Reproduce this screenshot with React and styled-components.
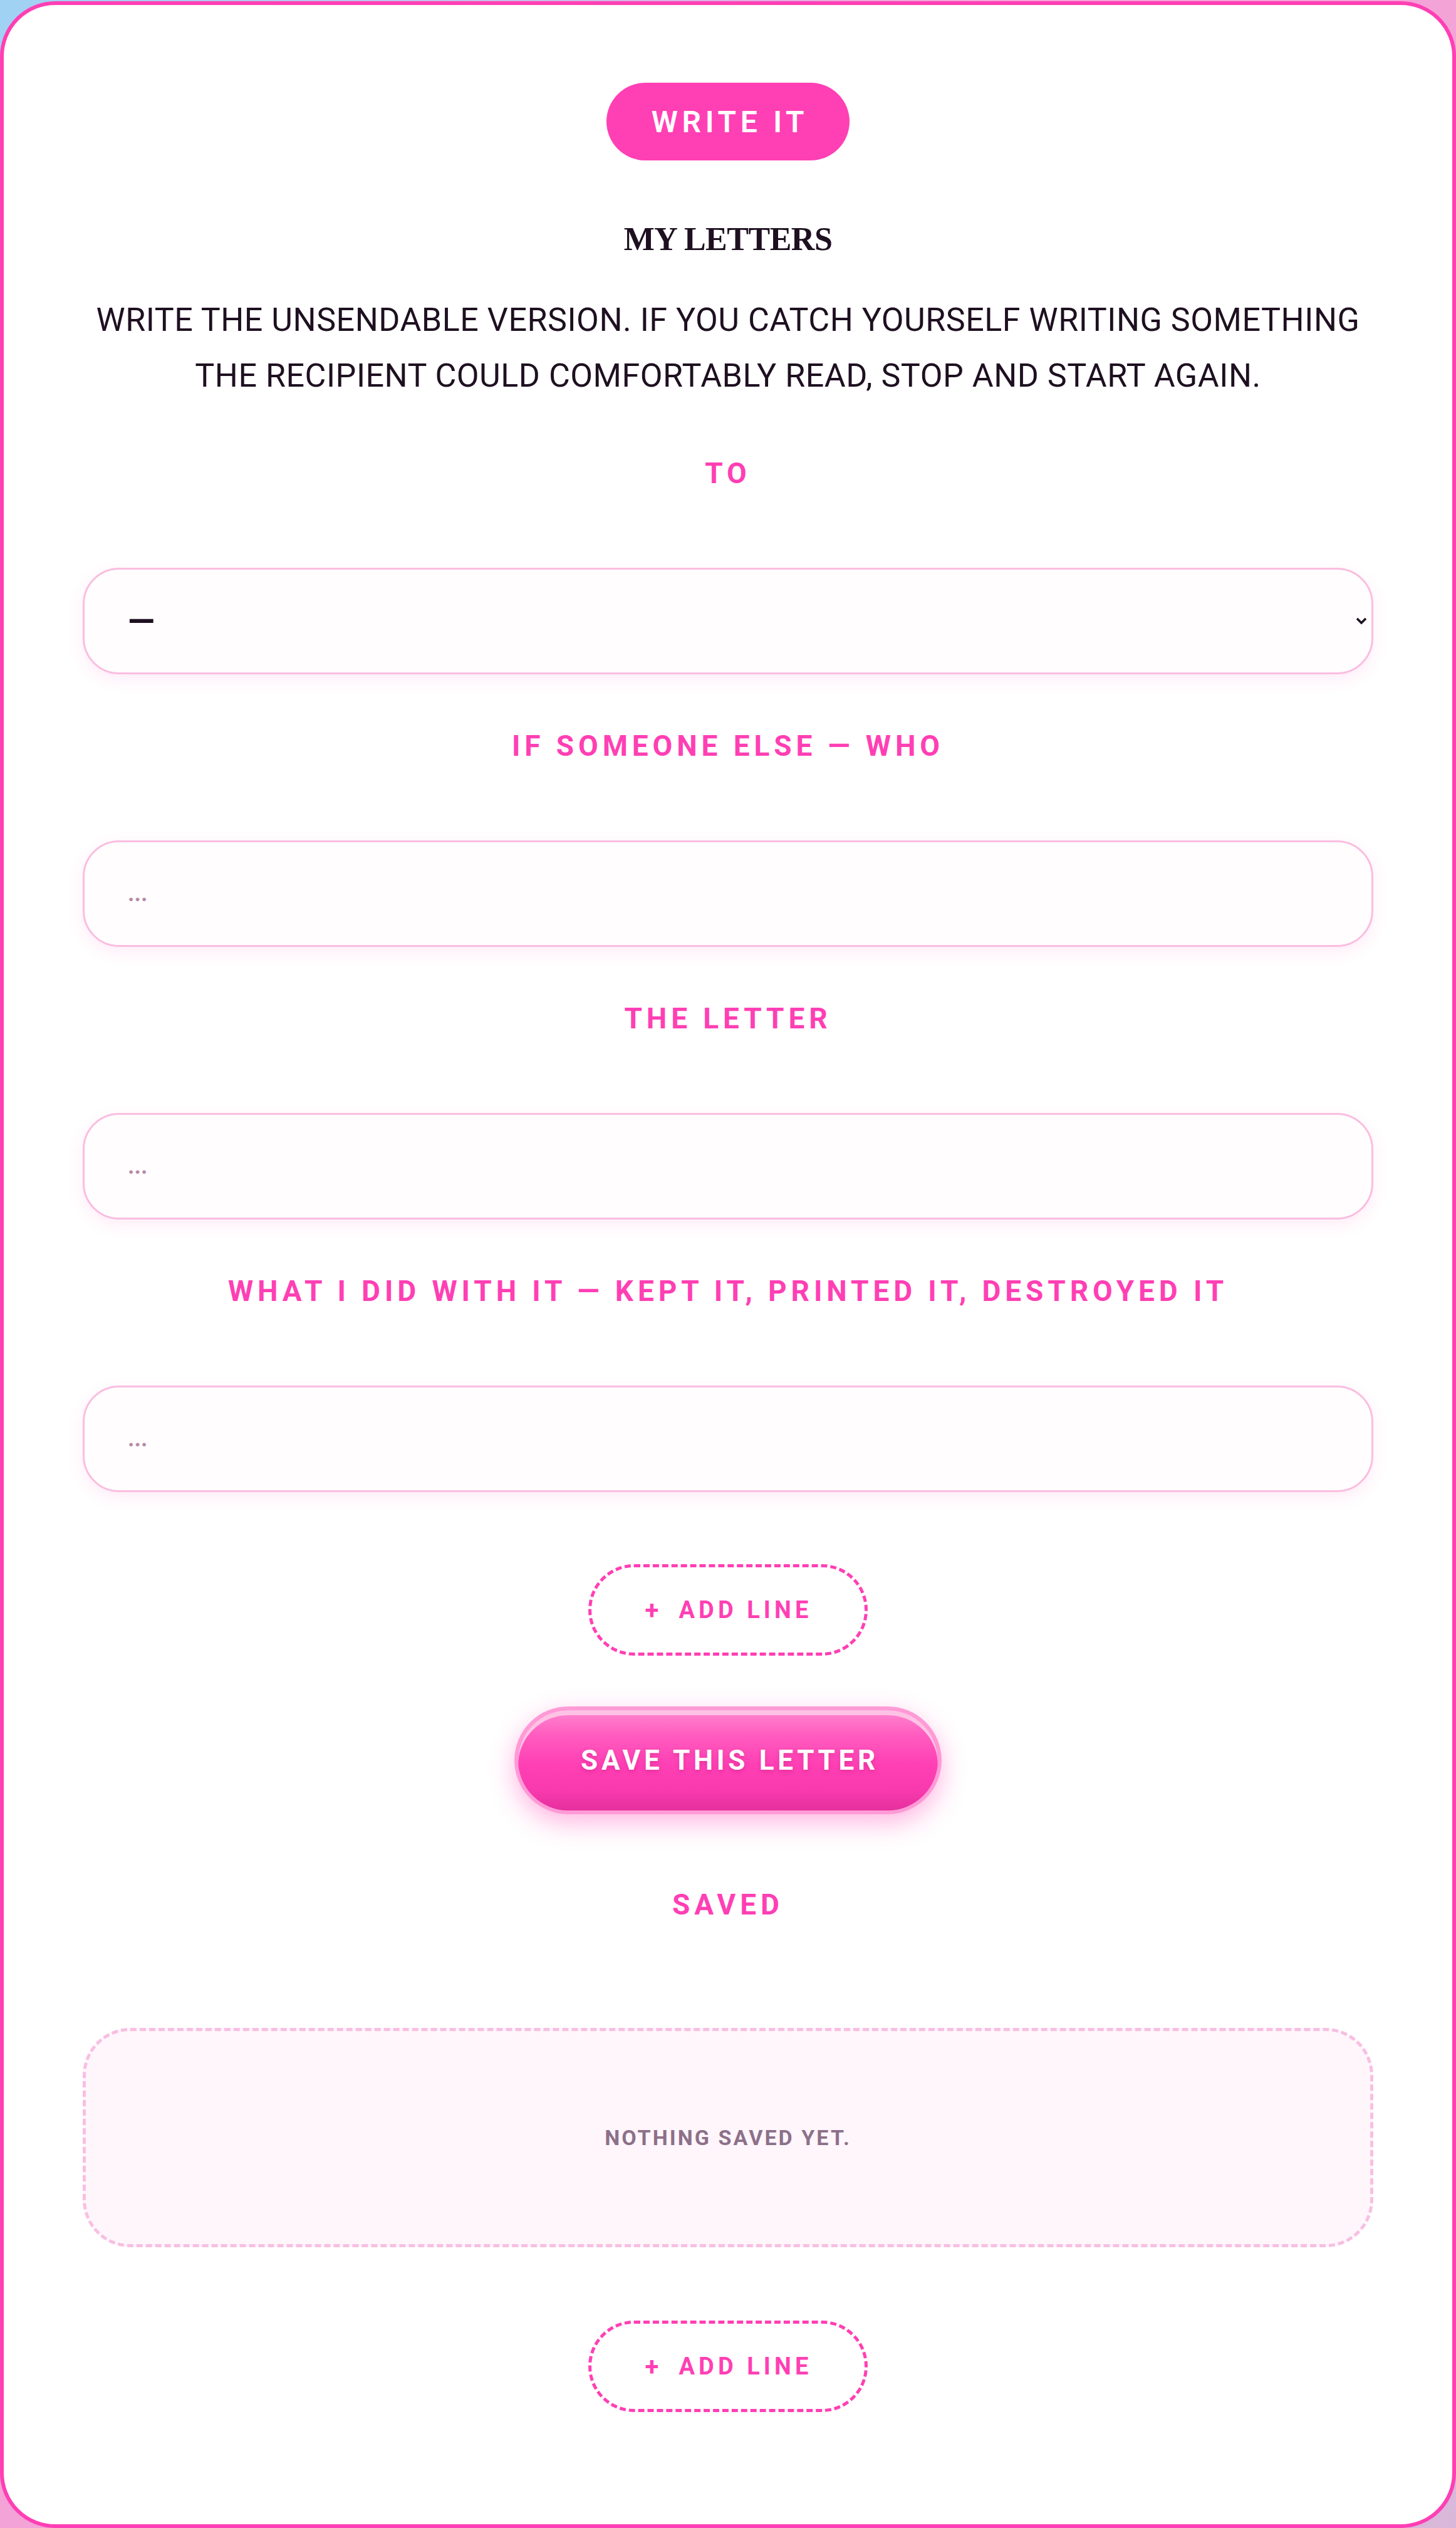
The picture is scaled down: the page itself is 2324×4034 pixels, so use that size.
import React from 'react';
import styled, { createGlobalStyle } from 'styled-components';

const pink = '#ff3fb4';
const ink = '#1e1020';

const GlobalStyle = createGlobalStyle`
  html, body {
    margin: 0;
    padding: 0;
  }
  body {
    background: linear-gradient(120deg, #9fd3f4 0%, #f7a2d8 35%, #f0a4d6 65%, #d8b8da 100%);
    font-family: Roboto, 'Liberation Sans', sans-serif;
    color: ${ink};
  }
  * {
    box-sizing: border-box;
  }
`;

const Page = styled.div`
  padding-top: 2px;
  min-height: 100vh;
`;

const Card = styled.main`
  display: flex;
  flex-direction: column;
  align-items: center;
  min-height: calc(100vh - 2px);
  padding: 124px 126px 0;
  background: #ffffff;
  border: 6px solid ${pink};
  border-radius: 88px;
`;

const WriteButton = styled.button`
  display: inline-flex;
  align-items: center;
  justify-content: center;
  height: 124px;
  padding: 0 66px 0 72px;
  border: none;
  border-radius: 999px;
  background: ${pink};
  color: #ffffff;
  font-family: Roboto, sans-serif;
  font-size: 48px;
  font-weight: 600;
  letter-spacing: 0.14em;
  cursor: pointer;
`;

const Title = styled.h1`
  margin: 95px 0 0;
  font-family: 'Liberation Serif', 'DejaVu Serif', serif;
  font-size: 52px;
  font-weight: 700;
  line-height: 1.2;
  letter-spacing: -0.5px;
  color: ${ink};
`;

const Intro = styled.p`
  width: 100%;
  margin: 53px 0 0;
  font-size: 52px;
  line-height: 89px;
  letter-spacing: 0.01em;
  text-align: center;
  color: ${ink};
`;

const Form = styled.div`
  display: flex;
  flex-direction: column;
  gap: 80px;
  width: 100%;
  margin-top: 77px;
`;

const Field = styled.div`
  display: flex;
  flex-direction: column;
`;

const Label = styled.label`
  display: block;
  margin-bottom: ${p => p.$below || 116}px;
  margin-top: ${p => p.$above || 0}px;
  font-size: 46px;
  font-weight: 700;
  line-height: 69px;
  letter-spacing: 0.15em;
  text-align: center;
  color: ${pink};
`;

const fieldBox = `
  width: 100%;
  height: 170px;
  padding: 0 69px;
  border: 3px solid #fabde0;
  border-radius: 58px;
  background: #fffdfe;
  box-shadow: 0 8px 26px rgba(255, 63, 180, 0.1);
  font-family: Roboto, sans-serif;
  font-size: 36px;
  color: ${ink};
  outline: none;
`;

const TextInput = styled.input`
  ${fieldBox}
  &::placeholder {
    color: #b48ca6;
    font-weight: 700;
  }
`;

const SelectWrap = styled.div`
  position: relative;
  width: 100%;
`;

const Select = styled.select`
  ${fieldBox}
  appearance: none;
  -webkit-appearance: none;
  font-size: 56px;
  font-weight: 700;
`;

const Chevron = styled.svg`
  position: absolute;
  right: 10px;
  top: 50%;
  width: 18px;
  height: 12px;
  transform: translateY(-50%);
  pointer-events: none;
`;

const AddLineButton = styled.button`
  display: inline-flex;
  align-items: center;
  justify-content: center;
  height: 146px;
  margin-top: ${p => p.$above}px;
  padding: 0 84px 0 86px;
  border: 5px dashed ${pink};
  border-radius: 999px;
  background: transparent;
  color: ${pink};
  font-family: Roboto, sans-serif;
  font-size: 38px;
  font-weight: 700;
  letter-spacing: 0.16em;
  cursor: pointer;
`;

const Plus = styled.span`
  margin-right: 26px;
  font-size: 40px;
`;

const SaveButton = styled.button`
  display: inline-flex;
  align-items: center;
  justify-content: center;
  height: 172px;
  margin-top: 81px;
  padding: 0 94px 0 100px;
  border: 6px solid #ff9ad6;
  border-radius: 999px;
  background: linear-gradient(180deg, #ff86cf 0%, #ff5cbf 25%, #ff3fb4 55%, #f83aae 80%, #e5309c 100%);
  box-shadow: inset 0 8px 0 #ffc2e5, 0 14px 40px rgba(255, 63, 180, 0.38);
  color: #ffffff;
  font-family: Roboto, sans-serif;
  font-size: 44px;
  font-weight: 700;
  letter-spacing: 0.13em;
  text-shadow: 0 3px 6px rgba(180, 20, 110, 0.35);
  cursor: pointer;
`;

const EmptyBox = styled.div`
  display: flex;
  align-items: center;
  justify-content: center;
  width: 100%;
  height: 350px;
  border: 5px dashed #f8bfe1;
  border-radius: 76px;
  background: #fff6fc;
`;

const EmptyText = styled.span`
  font-size: 34px;
  font-weight: 700;
  letter-spacing: 0.09em;
  color: #8d7089;
`;

const fields = [
  { id: 'other', label: 'IF SOMEONE ELSE — WHO' },
  { id: 'letter', label: 'THE LETTER' },
  { id: 'done', label: 'WHAT I DID WITH IT — KEPT IT, PRINTED IT, DESTROYED IT' },
];

export default function App() {
  return (
    <Page>
      <GlobalStyle />
      <Card>
        <WriteButton>WRITE IT</WriteButton>
        <Title>MY LETTERS</Title>
        <Intro>
          WRITE THE UNSENDABLE VERSION. IF YOU CATCH YOURSELF WRITING SOMETHING THE
          RECIPIENT COULD COMFORTABLY READ, STOP AND START AGAIN.
        </Intro>

        <Form>
          <Field>
            <Label htmlFor="to">TO</Label>
            <SelectWrap>
              <Select id="to" defaultValue="">
                <option value="">—</option>
              </Select>
              <Chevron viewBox="0 0 18 12">
                <polyline points="2,2 9,9 16,2" fill="none" stroke={ink} strokeWidth="3.6" />
              </Chevron>
            </SelectWrap>
          </Field>
          {fields.map(f => (
            <Field key={f.id}>
              <Label htmlFor={f.id}>{f.label}</Label>
              <TextInput id={f.id} placeholder="..." />
            </Field>
          ))}
        </Form>

        <AddLineButton $above={115}>
          <Plus>+</Plus>ADD LINE
        </AddLineButton>
        <SaveButton>SAVE THIS LETTER</SaveButton>

        <Label $above={110} $below={162}>SAVED</Label>
        <EmptyBox>
          <EmptyText>NOTHING SAVED YET.</EmptyText>
        </EmptyBox>

        <AddLineButton $above={117}>
          <Plus>+</Plus>ADD LINE
        </AddLineButton>
      </Card>
    </Page>
  );
}
